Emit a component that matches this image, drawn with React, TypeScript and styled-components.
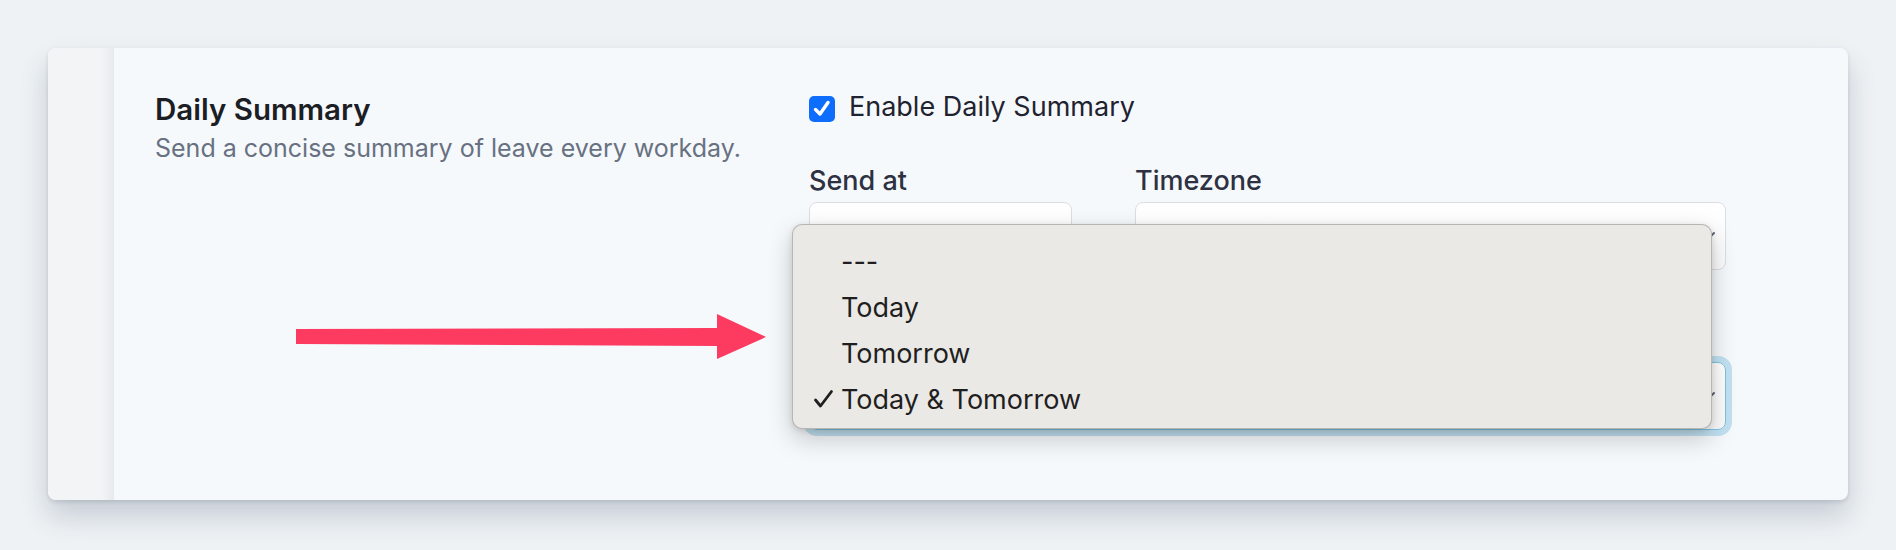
import styled, { createGlobalStyle } from "styled-components";

const GlobalStyle = createGlobalStyle`
  html, body {
    margin: 0;
    padding: 0;
    background: #eef2f5;
    font-family: Inter, "Noto Sans", "Liberation Sans", sans-serif;
    -webkit-font-smoothing: antialiased;
  }
`;

const Page = styled.div`
  padding: 48px;
  height: 550px;
  box-sizing: border-box;
`;

const Card = styled.div`
  position: relative;
  display: flex;
  height: 452px;
  border-radius: 8px;
  overflow: hidden;
  background: #f6f9fc;
  box-shadow: 0 16px 28px rgba(40, 55, 80, 0.2), 0 2px 4px rgba(40, 55, 80, 0.14);
`;

const Strip = styled.div`
  width: 66px;
  flex-shrink: 0;
  background: linear-gradient(to right, #f3f4f6 0%, #f3f4f6 82%, #e8e9ec 100%);
`;

const Main = styled.div`
  display: flex;
  padding: 43px 0 0 41px;
`;

const Intro = styled.div`
  width: 654px;
  padding-top: 1px;
`;

const Title = styled.h2`
  margin: 0;
  font-size: 29.5px;
  line-height: 35px;
  font-weight: 600;
  color: #1b1e24;
`;

const Description = styled.p`
  margin: 6px 0 0;
  font-size: 25px;
  line-height: 30px;
  color: #687181;
`;

const Settings = styled.div`
  width: 917px;
`;

const CheckRow = styled.label`
  display: flex;
  align-items: center;
  gap: 14px;
  font-size: 27px;
  line-height: 32px;
  color: #1f2330;
`;

const CheckBox = styled.span`
  width: 26px;
  height: 26px;
  border-radius: 5px;
  background: #0d6efd;
  display: flex;
  align-items: center;
  justify-content: center;
  margin-top: 4px;
`;

const FieldGrid = styled.div`
  display: grid;
  grid-template-columns: 263px 1fr;
  column-gap: 63px;
  margin-top: 42px;
`;

const Field = styled.div`
  display: flex;
  flex-direction: column;
  gap: 5px;
`;

const FieldLabel = styled.span`
  font-size: 27px;
  line-height: 32px;
  font-weight: 500;
  color: #2d3142;
`;

const SelectBox = styled.div<{ $focused?: boolean }>`
  height: 68px;
  box-sizing: border-box;
  border-radius: 8px;
  border: 1px solid ${(p) => (p.$focused ? "#7cc4e3" : "#dcdde2")};
  background: linear-gradient(#ffffff, #fbfbfc);
  display: flex;
  align-items: center;
  justify-content: flex-end;
  padding-right: 9px;
  box-shadow: ${(p) =>
    p.$focused ? "0 0 0 6px rgba(128, 196, 228, 0.45)" : "none"};
`;

const CoverageField = styled.div`
  position: relative;
  margin-top: 92px;
`;

const Menu = styled.div`
  position: absolute;
  left: -17px;
  top: -138px;
  width: 920px;
  height: 205px;
  box-sizing: border-box;
  padding: 13px 0 8px;
  border-radius: 10px;
  background: #ebe9e6;
  border: 1px solid rgba(0, 0, 0, 0.22);
  box-shadow: 0 10px 26px rgba(0, 0, 0, 0.2), 0 2px 6px rgba(0, 0, 0, 0.12);
`;

const MenuItem = styled.div`
  display: grid;
  grid-template-columns: 28px 1fr;
  align-items: center;
  height: 46px;
  padding-left: 20px;
  font-size: 27px;
  color: #1f1f1f;
`;

const CheckSlot = styled.span`
  display: flex;
  align-items: center;
  height: 46px;
`;

const Annotation = styled.svg`
  position: absolute;
  left: 248px;
  top: 265px;
`;

function Chevron() {
  return (
    <svg width="16" height="10" viewBox="0 0 16 10">
      <path
        d="M2 2 L8 8 L14 2"
        fill="none"
        stroke="#5f6673"
        strokeWidth="2"
        strokeLinecap="round"
        strokeLinejoin="round"
      />
    </svg>
  );
}

function MenuCheck() {
  return (
    <svg width="21" height="20" viewBox="0 0 21 20">
      <path
        d="M2.5 11 L7.5 17 L18.5 2.5"
        fill="none"
        stroke="#1f1f1f"
        strokeWidth="2.8"
        strokeLinecap="round"
        strokeLinejoin="round"
      />
    </svg>
  );
}

const options = ["---", "Today", "Tomorrow", "Today & Tomorrow"];
const selected = "Today & Tomorrow";

export default function App() {
  return (
    <>
      <GlobalStyle />
      <Page>
        <Card>
          <Strip />
          <Main>
            <Intro>
              <Title>Daily Summary</Title>
              <Description>
                Send a concise summary of leave every workday.
              </Description>
            </Intro>
            <Settings>
              <CheckRow>
                <CheckBox>
                  <svg width="20" height="20" viewBox="0 0 20 20">
                    <path
                      d="M3.5 10.5 L8 15 L16 3.5"
                      fill="none"
                      stroke="#fff"
                      strokeWidth="3.4"
                      strokeLinecap="round"
                      strokeLinejoin="round"
                    />
                  </svg>
                </CheckBox>
                Enable Daily Summary
              </CheckRow>
              <FieldGrid>
                <Field>
                  <FieldLabel>Send at</FieldLabel>
                  <SelectBox />
                </Field>
                <Field>
                  <FieldLabel>Timezone</FieldLabel>
                  <SelectBox>
                    <Chevron />
                  </SelectBox>
                </Field>
              </FieldGrid>
              <CoverageField>
                <SelectBox $focused>
                  <Chevron />
                </SelectBox>
                <Menu>
                  {options.map((o) => (
                    <MenuItem key={o}>
                      <CheckSlot>{o === selected && <MenuCheck />}</CheckSlot>
                      <span>{o}</span>
                    </MenuItem>
                  ))}
                </Menu>
              </CoverageField>
            </Settings>
          </Main>
          <Annotation width="472" height="48" viewBox="0 0 472 48">
            <path
              d="M0 16 L421 15 L421 1 L470 24 L421 46 L421 33 L0 31 Z"
              fill="#fd3b61"
            />
          </Annotation>
        </Card>
      </Page>
    </>
  );
}
